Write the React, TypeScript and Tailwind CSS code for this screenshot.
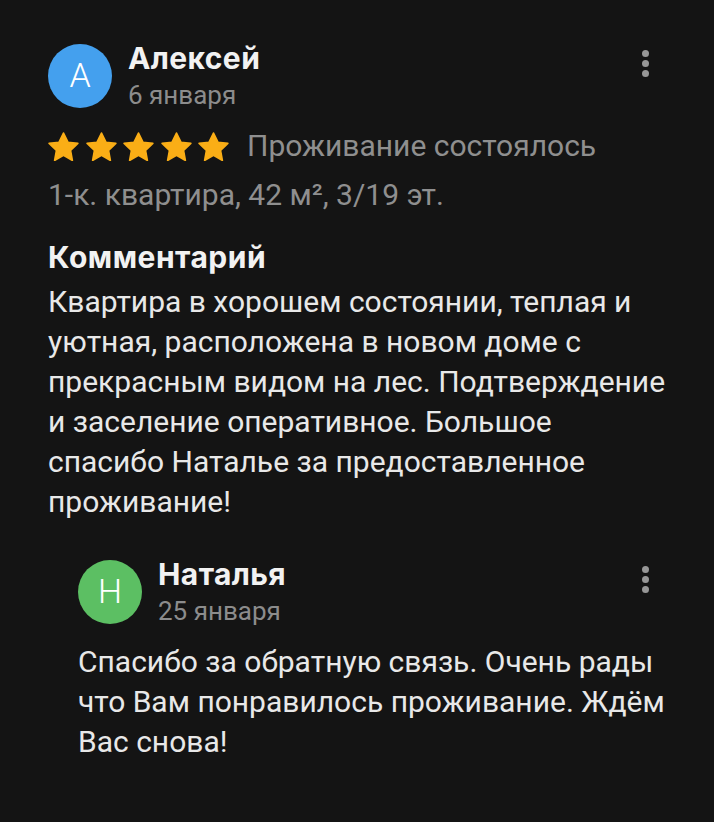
const Star = () => (
  <svg viewBox="2 2.2 20 19" className="w-[31px] h-[29px]" aria-hidden="true">
    <path
      d="M12 2.9l2.9 6 6.5.8-4.8 4.6 1.2 6.5L12 17.5l-5.8 3.3 1.2-6.5-4.8-4.6 6.5-.8z"
      fill="#faae16"
      stroke="#faae16"
      strokeWidth="1.1"
      strokeLinejoin="round"
    />
  </svg>
);

const MoreDots = () => (
  <div className="flex flex-col items-center gap-[3px] w-6">
    <span className="w-[7px] h-[7px] rounded-full bg-[#979797]" />
    <span className="w-[7px] h-[7px] rounded-full bg-[#979797]" />
    <span className="w-[7px] h-[7px] rounded-full bg-[#979797]" />
  </div>
);

type HeaderProps = {
  letter: string;
  name: string;
  date: string;
  color: string;
};

const AuthorHeader = ({ letter, name, date, color }: HeaderProps) => (
  <div className="flex items-center">
    <div
      className={`w-[64px] h-[64px] rounded-full flex items-center justify-center text-white text-[34px] font-light shrink-0 ${color}`}
    >
      {letter}
    </div>
    <div className="ml-[16px] flex flex-col">
      <span className="text-[30px] font-bold leading-[36px] tracking-[0.4px] text-[#f2f2f2] font-['Inter']">
        {name}
      </span>
      <span className="text-[26px] leading-[32px] text-[#8c8c8c] mt-[3px]">{date}</span>
    </div>
    <div className="ml-auto self-start mt-[10px]">
      <MoreDots />
    </div>
  </div>
);

export default function App() {
  return (
    <div
      className="min-h-screen bg-[#141414] pl-[48px] pr-[57px] pt-[40px] pb-16"
      style={{ fontFamily: "Roboto, 'Noto Sans', sans-serif" }}
    >
      <AuthorHeader letter="А" name="Алексей" date="6 января" color="bg-[#44a0ee]" />

      <div className="flex items-center mt-[15px]">
        <div className="flex gap-[6.5px]">
          <Star />
          <Star />
          <Star />
          <Star />
          <Star />
        </div>
        <span className="ml-[18px] text-[30px] leading-[40px] text-[#8f8f8f] whitespace-nowrap">
          Проживание состоялось
        </span>
      </div>
      <p className="text-[30px] leading-[40px] text-[#8f8f8f] mt-[9px] whitespace-nowrap">
        1-к. квартира, 42 м², 3/19 эт.
      </p>

      <h3 className="text-[30px] font-bold leading-[40px] tracking-[0.5px] text-[#f2f2f2] font-['Inter'] mt-[22px]">
        Комментарий
      </h3>
      <p className="text-[30px] leading-[40px] text-[#e8e8e8] mt-[5px] whitespace-nowrap">
        Квартира в хорошем состоянии, теплая и<br />
        уютная, расположена в новом доме с<br />
        прекрасным видом на лес. Подтверждение<br />
        и заселение оперативное. Большое<br />
        спасибо Наталье за предоставленное<br />
        проживание!
      </p>

      <div className="pl-[30px] mt-[34px]">
        <AuthorHeader letter="Н" name="Наталья" date="25 января" color="bg-[#5cbf63]" />
        <p className="text-[30px] leading-[40px] text-[#e8e8e8] mt-[15px] whitespace-nowrap">
          Спасибо за обратную связь. Очень рады<br />
          что Вам понравилось проживание. Ждём<br />
          Вас снова!
        </p>
      </div>
    </div>
  );
}
